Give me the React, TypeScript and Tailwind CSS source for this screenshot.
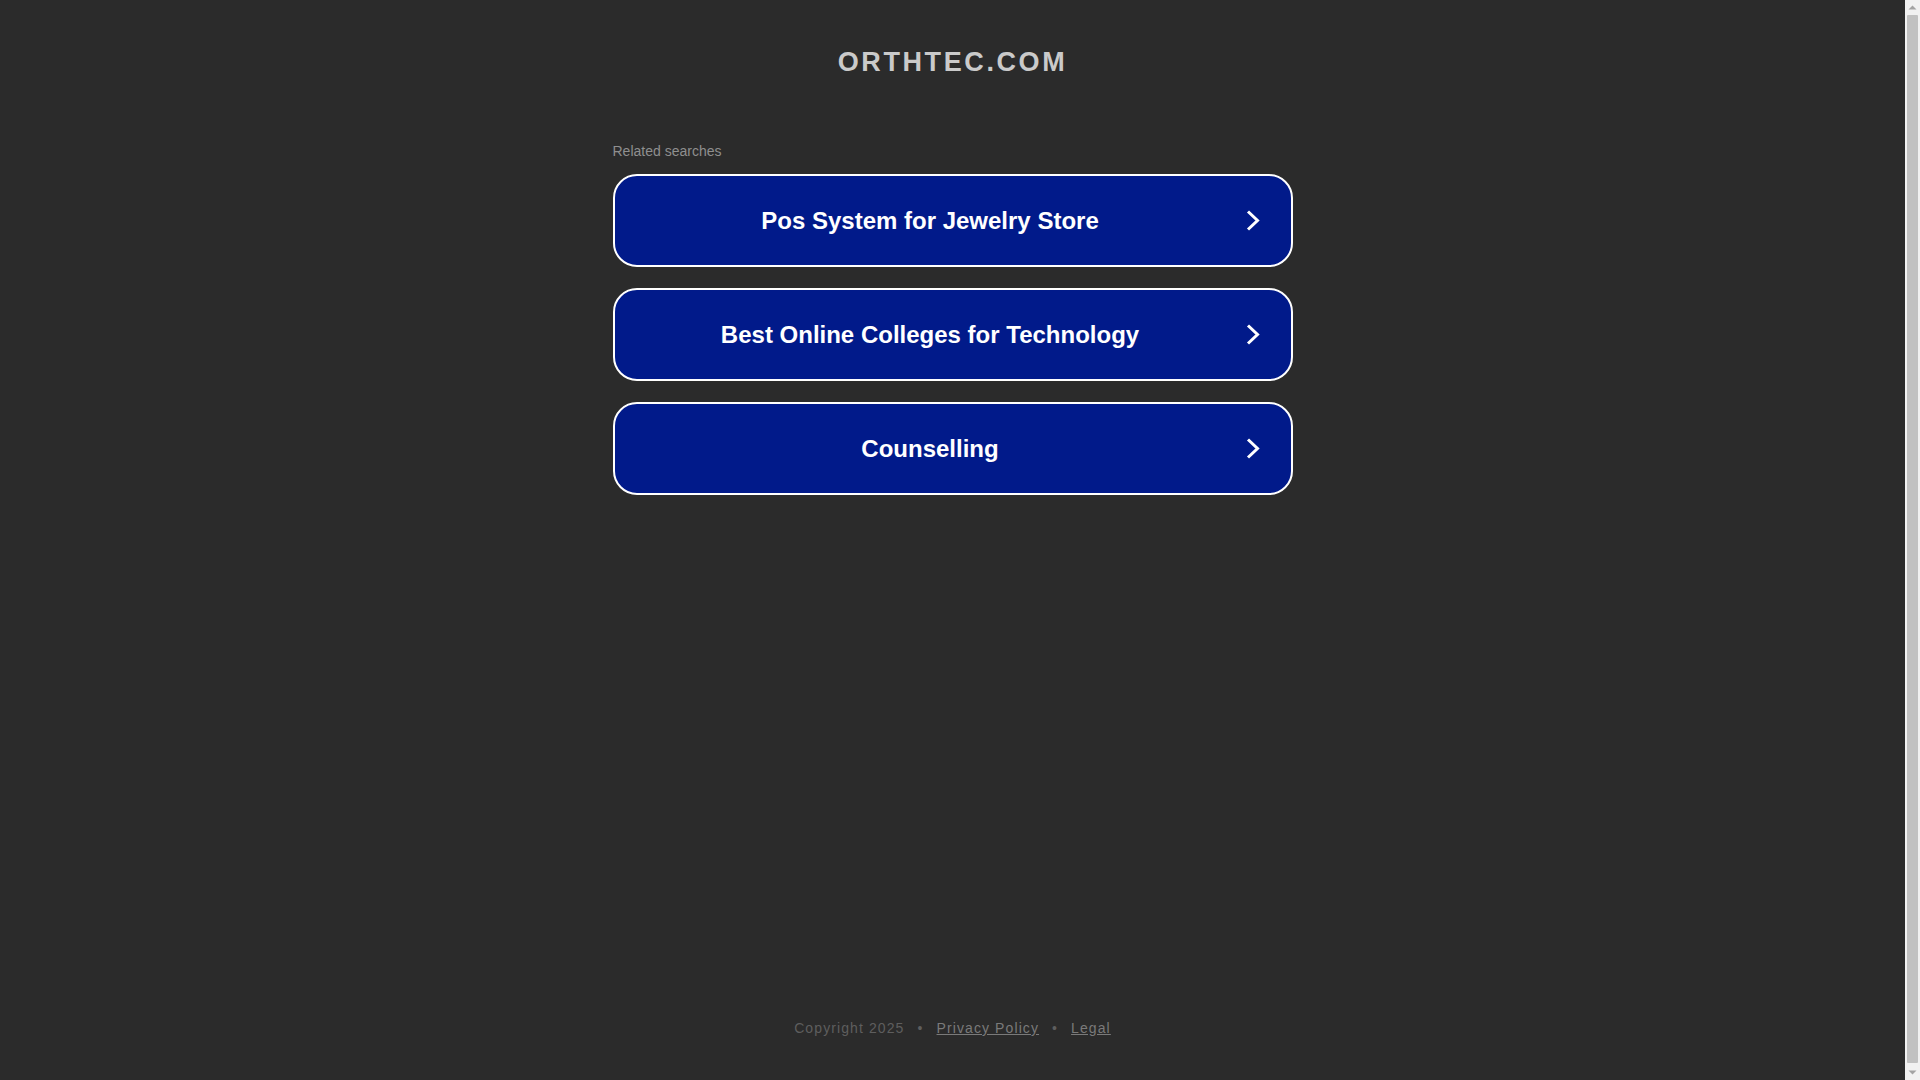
const searches = ['Pos System for Jewelry Store', 'Best Online Colleges for Technology', 'Counselling'];

function Chevron() {
  return (
    <svg width="14" height="21" viewBox="0 0 14 21" className="mr-[31px] shrink-0" fill="none">
      <polyline points="2,1.5 11.5,10.5 2,19.5" stroke="#ffffff" strokeWidth="3" strokeLinejoin="miter" />
    </svg>
  );
}

// browser-style vertical scrollbar seen on the right edge of the screenshot
function Scrollbar() {
  return (
    <div className="w-[15px] shrink-0 bg-[#f1f1f1] flex flex-col items-center">
      <svg width="15" height="15" viewBox="0 0 15 15" className="shrink-0">
        <polygon points="3.5,9.5 7.5,5.5 11.5,9.5" fill="#a3a3a3" />
      </svg>
      <div className="flex-1 w-[11px] rounded-[1px] bg-[#c1c1c1] mb-[2px]" />
      <svg width="15" height="15" viewBox="0 0 15 15" className="shrink-0">
        <polygon points="3.5,5.5 7.5,9.5 11.5,5.5" fill="#a3a3a3" />
      </svg>
    </div>
  );
}

export default function App() {
  return (
    <div className="h-screen flex bg-[#2b2b2b] font-['Liberation_Sans',Arial,sans-serif]">
      <main className="flex-1 flex flex-col items-center">
        {/* Domain title */}
        <h1 className="mt-[46px] text-[27px] leading-[32px] font-bold tracking-[2.6px] text-[#cacaca]">ORTHTEC.COM</h1>

        {/* Related searches */}
        <div className="w-[680px] mt-[65px]">
          <p className="text-[14px] leading-4 text-[#8f8f8f]">Related searches</p>
          <div className="mt-[15px] flex flex-col gap-[21px]">
            {searches.map((s) => (
              <a
                key={s}
                href="#"
                className="h-[93px] flex items-center bg-[#011a8a] border-2 border-white rounded-[24px] text-white"
              >
                <span className="flex-1 text-center text-[24px] font-bold">{s}</span>
                <Chevron />
              </a>
            ))}
          </div>
        </div>

        {/* Footer */}
        <footer className="mt-auto mb-[44px] flex items-center gap-[13px] text-[14px] leading-4 tracking-[1.1px] text-[#5e5e5e]">
          <span>Copyright 2025</span>
          <span>•</span>
          <a href="#" className="underline text-[#7a7a7a]">Privacy Policy</a>
          <span>•</span>
          <a href="#" className="underline text-[#7a7a7a]">Legal</a>
        </footer>
      </main>
      <Scrollbar />
    </div>
  );
}
